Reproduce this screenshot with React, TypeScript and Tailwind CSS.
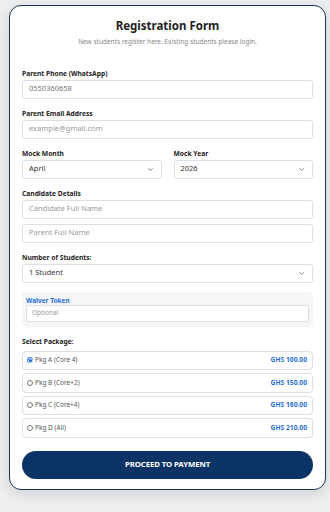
import React from "react"

const font = { fontFamily: '"Noto Sans", "Open Sans", sans-serif' }

function Chevron() {
  return (
    <svg width="7" height="7" viewBox="0 0 24 24" fill="none" stroke="#666" strokeWidth="3" strokeLinecap="round" strokeLinejoin="round">
      <path d="m6 9 6 6 6-6" />
    </svg>
  )
}

function Label({ children }: { children: React.ReactNode }) {
  return <div className="text-[6.7px] font-bold text-[#222] leading-[6px] mb-[3px] whitespace-nowrap">{children}</div>
}

function Input({ placeholder, value }: { placeholder?: string; value?: string }) {
  return (
    <div className="h-[19px] border border-[#dcdfe3] rounded-[3px] bg-white flex items-center px-[6px] text-[7.5px]">
      <span className={value ? "text-[#777]" : "text-[#9a9a9a]"}>{value ?? placeholder}</span>
    </div>
  )
}

function Select({ value }: { value: string }) {
  return (
    <div className="h-[19px] border border-[#dcdfe3] rounded-[3px] bg-white flex items-center justify-between pl-[6px] pr-[7px] text-[7.5px] text-[#333]">
      <span>{value}</span>
      <Chevron />
    </div>
  )
}

const packages = [
  { name: "Pkg A (Core 4)", price: "GHS 100.00", checked: true },
  { name: "Pkg B (Core+2)", price: "GHS 150.00" },
  { name: "Pkg C (Core+4)", price: "GHS 180.00" },
  { name: "Pkg D (All)", price: "GHS 210.00" },
]

export default function App() {
  return (
    <div className="w-[330px] h-[512px] bg-[#eceeef] pt-[5px] pl-[9px]" style={font}>
      <div className="w-[317px] h-[485px] bg-white border-[1.5px] border-[#173457] rounded-[12px] shadow-[0_4px_14px_rgba(0,0,0,0.12)] px-[12px] pt-[13px]">
        <h1 className="text-[11.5px] font-bold text-[#222] text-center leading-none mt-[1px]">Registration Form</h1>
        <p className="text-[6.5px] text-[#888] text-center mt-[7px] leading-[6.5px]">
          New students register here. Existing students please login.
        </p>

        <div className="mt-[25.5px]">
          <Label>Parent Phone (WhatsApp)</Label>
          <Input value="0550360658" />
        </div>

        <div className="mt-[12px]">
          <Label>Parent Email Address</Label>
          <Input placeholder="example@gmail.com" />
        </div>

        <div className="mt-[12px] grid grid-cols-2 gap-[12px]">
          <div>
            <Label>Mock Month</Label>
            <Select value="April" />
          </div>
          <div>
            <Label>Mock Year</Label>
            <Select value="2026" />
          </div>
        </div>

        <div className="mt-[12px]">
          <Label>Candidate Details</Label>
          <div className="flex flex-col gap-[5px]">
            <Input placeholder="Candidate Full Name" />
            <Input placeholder="Parent Full Name" />
          </div>
        </div>

        <div className="mt-[12px]">
          <Label>Number of Students:</Label>
          <Select value="1 Student" />
        </div>

        <div className="mt-[9px] h-[35px] bg-[#f4f6f8] rounded-[4px] px-[4px] pt-[6px]">
          <div className="text-[6.5px] font-bold text-[#2a6fd6] leading-[6px] mb-[1px]">Waiver Token</div>
          <div className="h-[17px] border border-[#dcdfe3] rounded-[2px] bg-white flex items-center px-[5px] text-[6.5px] text-[#999]">
            Optional
          </div>
        </div>

        <div className="mt-[12px]">
          <div className="text-[6.7px] font-bold text-[#222] leading-[6px] mb-[6px]">Select Package:</div>
          <div className="flex flex-col gap-[3px]">
            {packages.map((p) => (
              <div key={p.name} className="h-[19.5px] border border-[#dcdfe3] rounded-[4px] flex items-center justify-between pl-[4px] pr-[5px] text-[6.5px]">
                <div className="flex items-center gap-[2px] text-[#555]">
                  {p.checked ? (
                    <span className="w-[6px] h-[6px] rounded-full bg-[#3b82f6] flex items-center justify-center">
                      <span className="w-[3px] h-[3px] rounded-full bg-[#1d5fd1] ring-[0.7px] ring-white" />
                    </span>
                  ) : (
                    <span className="w-[6px] h-[6px] rounded-full border-[0.8px] border-[#777] bg-white" />
                  )}
                  <span>{p.name}</span>
                </div>
                <span className="font-bold text-[#2a6fd6] text-[6.7px]">{p.price}</span>
              </div>
            ))}
          </div>
        </div>

        <div className="mt-[13px] h-[28px] rounded-full bg-[#0b3366] flex items-center justify-center text-white text-[7.8px] font-bold tracking-[-0.1px]">
          PROCEED TO PAYMENT
        </div>
      </div>
    </div>
  )
}
